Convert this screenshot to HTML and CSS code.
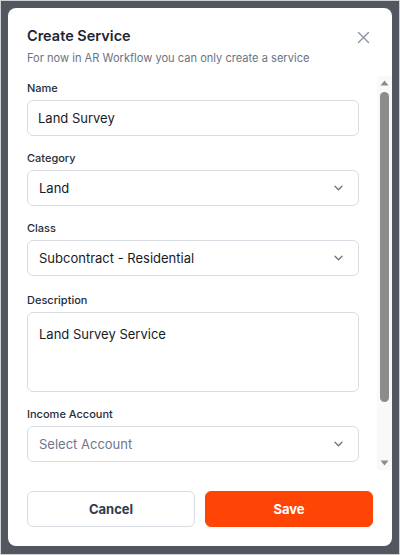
FILE: index.html
```html
<!DOCTYPE html>
<html lang="en">
<head>
<meta charset="utf-8">
<title>Create Service</title>
<link rel="stylesheet" href="styles.css">
</head>
<body>
<div class="modal">
  <div class="header">
    <h1 class="title">Create Service</h1>
    <p class="subtitle">For now in AR Workflow you can only create a service</p>
    <button class="close" aria-label="Close">
      <svg width="13" height="13" viewBox="0 0 13 13"><path d="M1.5 1.5 L11.5 11.5 M11.5 1.5 L1.5 11.5" stroke="#8a93a6" stroke-width="1.4" stroke-linecap="round" fill="none"/></svg>
    </button>
  </div>
  <div class="scroll-wrap">
    <div class="scroll">
      <div class="field">
        <div class="label">Name</div>
        <div class="control">Land Survey</div>
      </div>
      <div class="field">
        <div class="label">Category</div>
        <div class="control select"><span>Land</span>
          <svg class="chev" width="9" height="6" viewBox="0 0 9 6"><path d="M1 1.2 L4.5 4.7 L8 1.2" stroke="#6b7385" stroke-width="1.3" fill="none" stroke-linecap="round" stroke-linejoin="round"/></svg>
        </div>
      </div>
      <div class="field">
        <div class="label">Class</div>
        <div class="control select"><span>Subcontract - Residential</span>
          <svg class="chev" width="9" height="6" viewBox="0 0 9 6"><path d="M1 1.2 L4.5 4.7 L8 1.2" stroke="#6b7385" stroke-width="1.3" fill="none" stroke-linecap="round" stroke-linejoin="round"/></svg>
        </div>
      </div>
      <div class="field desc">
        <div class="label">Description</div>
        <div class="control textarea">Land Survey Service</div>
      </div>
      <div class="field">
        <div class="label">Income Account</div>
        <div class="control select"><span class="placeholder">Select Account</span>
          <svg class="chev" width="9" height="6" viewBox="0 0 9 6"><path d="M1 1.2 L4.5 4.7 L8 1.2" stroke="#6b7385" stroke-width="1.3" fill="none" stroke-linecap="round" stroke-linejoin="round"/></svg>
        </div>
      </div>
    </div>
    <div class="scrollbar" aria-hidden="true">
      <svg class="sb-btn" width="15" height="15" viewBox="0 0 15 15"><polygon points="3.5,9.5 7.5,4.5 11.5,9.5" fill="#8c8c8c"/></svg>
      <div class="sb-track"><div class="sb-thumb"></div></div>
      <svg class="sb-btn" width="15" height="15" viewBox="0 0 15 15"><polygon points="3.5,5.5 11.5,5.5 7.5,10.5" fill="#8c8c8c"/></svg>
    </div>
  </div>
  <div class="footer">
    <button class="btn cancel">Cancel</button>
    <button class="btn save">Save</button>
  </div>
</div>
</body>
</html>
```
FILE: styles.css
```css
html, body {
  margin: 0;
}
body {
  height: 555px;
  box-sizing: border-box;
  border: 1px solid #cfd0d3;
  background: #52565e;
  padding: 7px 7px 8px 7px;
  font-family: "Inter", "Liberation Sans", sans-serif;
}
.modal {
  background: #fff;
  border-radius: 8px;
  height: 538px;
  display: flex;
  flex-direction: column;
}
.header {
  position: relative;
  padding: 18px 19px 0 19px;
}
.title {
  margin: 0;
  font-size: 14.5px;
  line-height: 20px;
  font-weight: 600;
  color: #1f2633;
}
.subtitle {
  margin: 4px 0 0 0;
  font-size: 11.1px;
  line-height: 16px;
  color: #6b7384;
}
.close {
  position: absolute;
  top: 23px;
  right: 22px;
  width: 13px;
  height: 13px;
  padding: 0;
  border: 0;
  background: none;
  display: block;
}
.close svg { display: block; }
.scroll-wrap {
  margin-top: 10px;
  height: 394px;
  display: flex;
}
.scroll {
  flex: 1;
  min-width: 0;
  overflow: hidden;
  padding: 4px 18px 0 19px;
  display: flex;
  flex-direction: column;
  gap: 14px;
}
.scrollbar {
  width: 15px;
  flex-shrink: 0;
  background: #f9f9f9;
  display: flex;
  flex-direction: column;
}
.sb-btn {
  display: block;
  flex-shrink: 0;
}
.sb-track {
  flex: 1;
  padding-top: 1px;
}
.sb-thumb {
  margin: 0 3px;
  height: 310px;
  border-radius: 5px;
  background: #8c8c8c;
}
.field {
  display: flex;
  flex-direction: column;
  gap: 4px;
  flex-shrink: 0;
}
.desc {
  margin-top: 2px;
}
.label {
  font-size: 11px;
  line-height: 16px;
  font-weight: 500;
  color: #262d3a;
}
.control {
  box-sizing: border-box;
  height: 36px;
  border: 1px solid #d9dce2;
  border-radius: 6px;
  padding: 0 10px;
  font-size: 13px;
  line-height: 34px;
  color: #161b26;
}
.select {
  display: flex;
  align-items: center;
  justify-content: space-between;
  padding: 0 15px 0 11px;
}
.chev { display: block; }
.placeholder { color: #6e7687; }
.textarea {
  height: 80px;
  padding: 11px 11px;
  line-height: 20px;
}
.footer {
  padding: 21px 19px 19px 19px;
  display: grid;
  grid-template-columns: 1fr 1fr;
  gap: 10px;
}
.btn {
  height: 36px;
  border-radius: 6px;
  font-family: "Inter", "Liberation Sans", sans-serif;
  font-size: 13px;
  font-weight: 700;
  cursor: pointer;
}
.cancel {
  background: #fff;
  border: 1px solid #d9dce2;
  color: #323b4b;
}
.save {
  background: #ff4506;
  border: 1px solid #ff4506;
  color: #fff;
}
```
